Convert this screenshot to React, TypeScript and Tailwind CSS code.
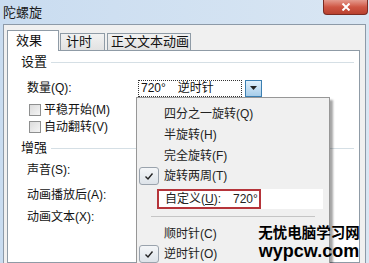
import React from 'react';

const ui = { fontFamily: '"Liberation Sans", "Noto Sans CJK SC", sans-serif' };

function Check() {
  return (
    <span className="absolute left-[2px] top-1/2 -translate-y-1/2 w-[20px] h-[18px] rounded-[3px] border border-[#9aa3ad] bg-gradient-to-b from-[#f4f6f8] to-[#dde3e9] flex items-center justify-center">
      <svg width="10" height="9" viewBox="0 0 10 9">
        <path d="M1.5 4.5 L4 7 L8.5 1.5" fill="none" stroke="#222" strokeWidth="1.4" />
      </svg>
    </span>
  );
}

function MenuItem({ label, checked, h = 20 }: { label: React.ReactNode; checked?: boolean; h?: number }) {
  return (
    <div className="relative flex items-center pl-[27px]" style={{ height: h }}>
      {checked && <Check />}
      <span className="text-[12px] text-[#222] whitespace-nowrap">{label}</span>
    </div>
  );
}

function Group({ title }: { title: string }) {
  return (
    <div className="h-[14px] flex items-center pl-[13px] pr-[5px] gap-[4px]">
      <span className="text-[13px] text-[#111] whitespace-nowrap">{title}</span>
      <div className="flex-1 h-px bg-[#d5dfe5]" />
    </div>
  );
}

function Box({ label }: { label: string }) {
  return (
    <div className="h-[16px] flex items-center pl-[21px] gap-[3px]">
      <span className="w-[12px] h-[12px] border border-[#8e8f8f] bg-gradient-to-br from-[#dcdcdc] to-[#f4f4f4]" />
      <span className="text-[12px] text-[#111] whitespace-nowrap">{label}</span>
    </div>
  );
}

export default function App() {
  return (
    <div className="relative w-[369px] h-[263px] overflow-hidden bg-gradient-to-r from-[#c9dcf0] to-[#d9e6f3] flex flex-col" style={ui}>
      {/* Title bar */}
      <div className="h-[24px] flex items-start justify-between shrink-0">
        <span className="pl-[3px] pt-[3px] text-[13px] text-[#1a1a1a]">陀螺旋</span>
        <div className="mr-[1px] w-[45px] h-[15px] rounded-b-[4px] border border-t-0 border-[#7a2b22] bg-gradient-to-b from-[#e49a8e] via-[#cf5644] to-[#b8412f] flex items-center justify-center">
          <svg width="10" height="8" viewBox="0 0 10 8">
            <path d="M1.5 0.5 L8.5 7.5 M8.5 0.5 L1.5 7.5" stroke="#fff" strokeWidth="2" />
          </svg>
        </div>
      </div>

      {/* Body */}
      <div className="flex-1 ml-[3px] mr-[3px] bg-[#f0f0f0] border-t border-l border-r border-[#8d9aa8] pl-[3px] pr-[5px] pt-[5px] flex flex-col">
        {/* Tabs */}
        <div className="flex items-end h-[21px] relative z-10 whitespace-nowrap">
          <div className="h-[21px] w-[52px] bg-white border border-b-0 border-[#8f9ba6] flex items-center pl-[8px] text-[13px] text-[#111]">效果</div>
          <div className="h-[18px] w-[45px] ml-[1px] bg-gradient-to-b from-[#f2f2f2] to-[#e2e2e2] border border-[#8f9ba6] flex items-center pl-[5px] text-[13px] text-[#111]">计时</div>
          <div className="h-[18px] w-[84px] ml-[2px] bg-gradient-to-b from-[#f2f2f2] to-[#e2e2e2] border border-[#8f9ba6] flex items-center pl-[3px] text-[13px] text-[#111]">正文文本动画</div>
        </div>
        {/* Panel */}
        <div className="flex-1 -mt-px bg-white border border-[#8f9ba6] pt-[4px]">
          <Group title="设置" />
          <div className="h-[18px] mt-[10px] flex items-center">
            <span className="pl-[19px] w-[130px] text-[12px] text-[#111]">数量(Q):</span>
            <div className="w-[104px] h-[17px] border border-dotted border-[#333] flex items-center pl-[2px] gap-[12px] text-[12px] text-[#111]">
              <span>720°</span>
              <span>逆时针</span>
            </div>
            <div className="ml-[3px] w-[17px] h-[17px] border border-[#3c7fb1] bg-gradient-to-b from-[#e1f0fb] to-[#a6cdea] flex items-center justify-center">
              <svg width="7" height="4" viewBox="0 0 7 4"><path d="M0 0 H7 L3.5 4 Z" fill="#222" /></svg>
            </div>
          </div>
          <div className="mt-[5px]"><Box label="平稳开始(M)" /></div>
          <div className="mt-[1px]"><Box label="自动翻转(V)" /></div>
          <div className="mt-[6px]"><Group title="增强" /></div>
          <div className="h-[16px] mt-[7px] flex items-center pl-[19px] text-[12px] text-[#111]">声音(S):</div>
          <div className="h-[16px] mt-[9px] flex items-center pl-[19px] text-[12px] text-[#111]">动画播放后(A):</div>
          <div className="h-[16px] mt-[6px] flex items-center pl-[19px] text-[12px] text-[#111]">动画文本(X):</div>
        </div>
      </div>

      {/* Dropdown menu */}
      <div className="absolute left-[136px] top-[97px] w-[194px] h-[180px] bg-[#f0f0f0] border border-[#979797] shadow-[3px_3px_2px_rgba(0,0,0,0.35)] pt-[6px] z-20">
        <MenuItem label="四分之一旋转(Q)" />
        <MenuItem label="半旋转(H)" h={22} />
        <MenuItem label="完全旋转(F)" />
        <MenuItem label="旋转两周(T)" checked />
        <div className="mt-[3px] ml-[20px] mr-[6px] h-[20px] bg-white flex">
          <div className="w-[104px] h-[20px] border-2 border-[#b5343a] flex items-center pl-[6px] gap-[12px] text-[12px] text-[#222] whitespace-nowrap">
            <span>自定义(<span className="underline">U</span>):</span>
            <span>720°</span>
          </div>
        </div>
        <div className="mt-[7px] ml-[14px] mr-[14px] h-px bg-[#c5c5c5]" />
        <div className="mt-[7px]"><MenuItem label="顺时针(C)" /></div>
        <MenuItem label="逆时针(O)" checked />
      </div>

      {/* Watermark */}
      <div className="absolute left-[257px] top-[225px] w-[104px] z-30 flex flex-col items-center leading-none font-bold text-black whitespace-nowrap">
        <span className="text-[14.5px]" style={{ fontFamily: '"Noto Sans CJK SC", sans-serif' }}>无忧电脑学习网</span>
        <span className="text-[18px] mt-[2px]" style={{ fontFamily: '"Liberation Sans", sans-serif' }}>wypcw.com</span>
      </div>
    </div>
  );
}
